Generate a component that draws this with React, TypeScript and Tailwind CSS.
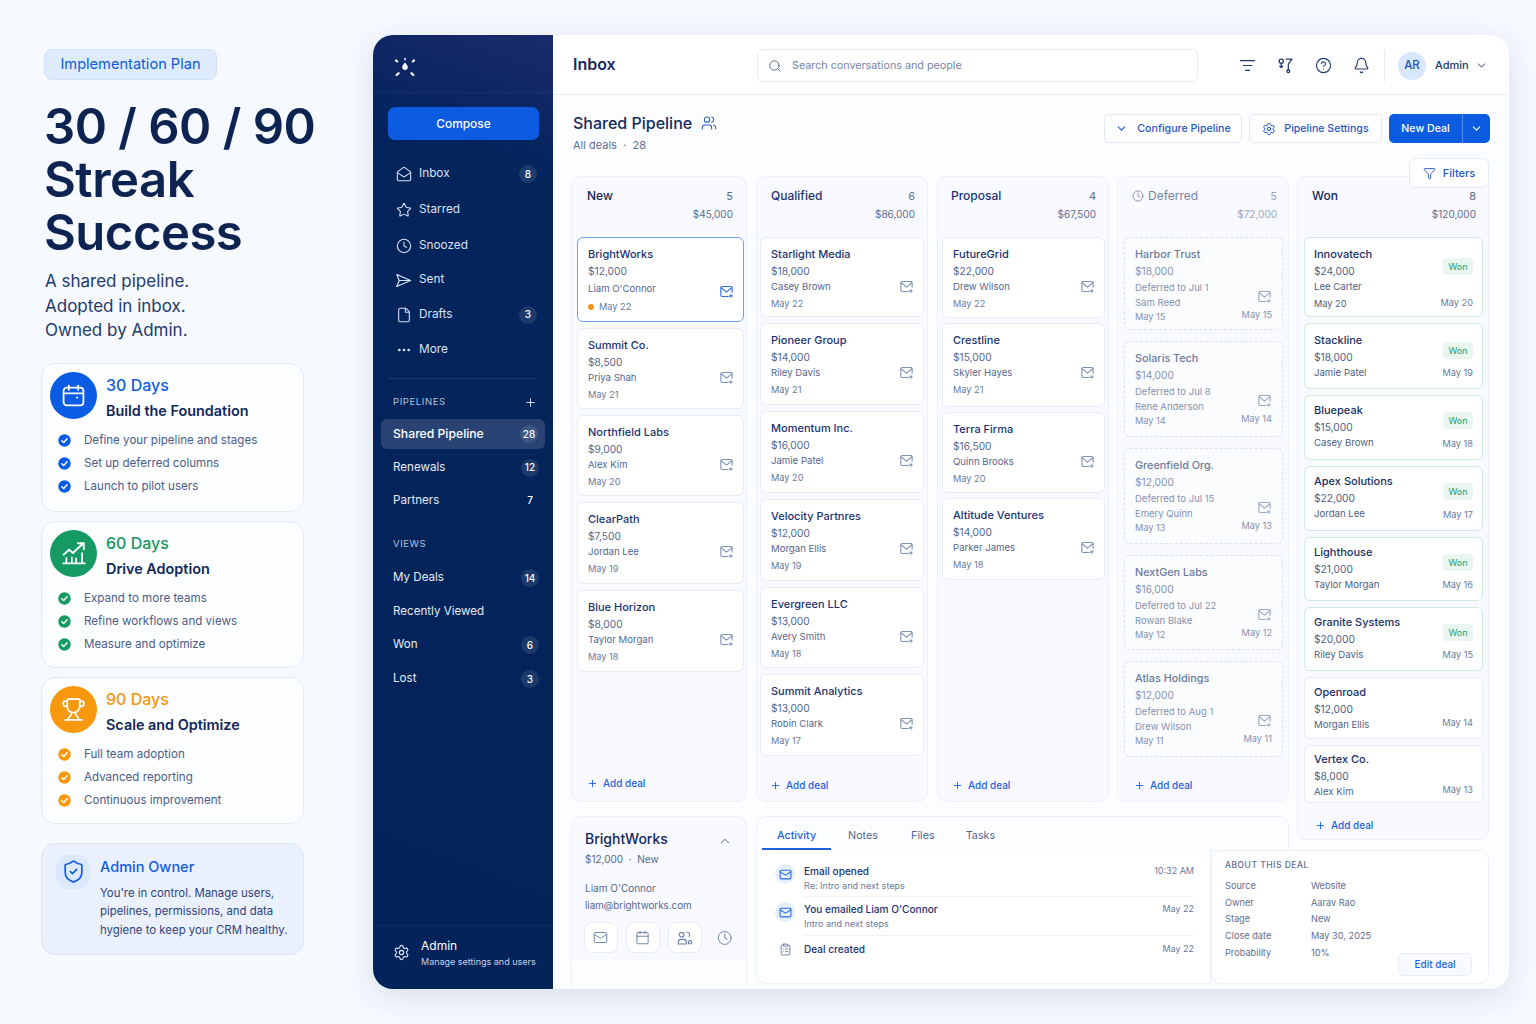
// App.tsx
import {
  Bell,
  Calendar,
  ChevronDown,
  ChevronUp,
  CircleHelp,
  Clock,
  Ellipsis,
  File,
  Filter,
  ListFilter,
  Mail,
  MailOpen,
  Plus,
  Search,
  Settings,
  ShieldCheck,
  Star,
  Trophy,
  Users,
  ClipboardList,
} from 'lucide-react';

type Deal = {
  n: string;
  a: string;
  p: string;
  d?: string;
  h: string;
  extra?: string;
  right?: string;
  badge?: boolean;
  pad?: string;
};

const newDeals: Deal[] = [
  { n: 'BrightWorks', a: '$12,000', p: "Liam O'Connor", d: 'May 22', h: 'h-[85px]' },
  { n: 'Summit Co.', a: '$8,500', p: 'Priya Shah', d: 'May 21', h: 'h-[81px]' },
  { n: 'Northfield Labs', a: '$9,000', p: 'Alex Kim', d: 'May 20', h: 'h-[81px]' },
  { n: 'ClearPath', a: '$7,500', p: 'Jordan Lee', d: 'May 19', h: 'h-[82px]' },
  { n: 'Blue Horizon', a: '$8,000', p: 'Taylor Morgan', d: 'May 18', h: 'h-[82px]' },
];

const qualifiedDeals: Deal[] = [
  { n: 'Starlight Media', a: '$18,000', p: 'Casey Brown', d: 'May 22', h: 'h-[80px]' },
  { n: 'Pioneer Group', a: '$14,000', p: 'Riley Davis', d: 'May 21', h: 'h-[82px]' },
  { n: 'Momentum Inc.', a: '$16,000', p: 'Jamie Patel', d: 'May 20', h: 'h-[82px]' },
  { n: 'Velocity Partnres', a: '$12,000', p: 'Morgan Ellis', d: 'May 19', h: 'h-[82px]' },
  { n: 'Evergreen LLC', a: '$13,000', p: 'Avery Smith', d: 'May 18', h: 'h-[81px]' },
  { n: 'Summit Analytics', a: '$13,000', p: 'Robin Clark', d: 'May 17', h: 'h-[82px]' },
];

const proposalDeals: Deal[] = [
  { n: 'FutureGrid', a: '$22,000', p: 'Drew Wilson', d: 'May 22', h: 'h-[81px]' },
  { n: 'Crestline', a: '$15,000', p: 'Skyler Hayes', d: 'May 21', h: 'h-[84px]' },
  { n: 'Terra Firma', a: '$16,500', p: 'Quinn Brooks', d: 'May 20', h: 'h-[81px]' },
  { n: 'Altitude Ventures', a: '$14,000', p: 'Parker James', d: 'May 18', h: 'h-[82px]' },
];

const deferredDeals: Deal[] = [
  { n: 'Harbor Trust', a: '$18,000', extra: 'Deferred to Jul 1', p: 'Sam Reed', d: 'May 15', h: 'h-[93px]' },
  { n: 'Solaris Tech', a: '$14,000', extra: 'Deferred to Jul 8', p: 'Rene Anderson', d: 'May 14', h: 'h-[96px]' },
  { n: 'Greenfield Org.', a: '$12,000', extra: 'Deferred to Jul 15', p: 'Emery Quinn', d: 'May 13', h: 'h-[96px]' },
  { n: 'NextGen Labs', a: '$16,000', extra: 'Deferred to Jul 22', p: 'Rowan Blake', d: 'May 12', h: 'h-[95px]' },
  { n: 'Atlas Holdings', a: '$12,000', extra: 'Deferred to Aug 1', p: 'Drew Wilson', d: 'May 11', h: 'h-[96px]' },
];

const wonDeals: Deal[] = [
  { n: 'Innovatech', a: '$24,000', p: 'Lee Carter', d: 'May 20', right: 'May 20', badge: true, h: 'h-[80px]', pad: 'pt-[8px] pb-[6px]' },
  { n: 'Stackline', a: '$18,000', p: 'Jamie Patel', right: 'May 19', badge: true, h: 'h-[66px]', pad: 'pt-[8px] pb-[8px]' },
  { n: 'Bluepeak', a: '$15,000', p: 'Casey Brown', right: 'May 18', badge: true, h: 'h-[65px]', pad: 'pt-[6px] pb-[8px]' },
  { n: 'Apex Solutions', a: '$22,000', p: 'Jordan Lee', right: 'May 17', badge: true, h: 'h-[65px]', pad: 'pt-[6px] pb-[8px]' },
  { n: 'Lighthouse', a: '$21,000', p: 'Taylor Morgan', right: 'May 16', badge: true, h: 'h-[64px]', pad: 'pt-[6px] pb-[8px]' },
  { n: 'Granite Systems', a: '$20,000', p: 'Riley Davis', right: 'May 15', badge: true, h: 'h-[64px]', pad: 'pt-[6px] pb-[8px]' },
  { n: 'Openroad', a: '$12,000', p: 'Morgan Ellis', right: 'May 14', h: 'h-[62px]', pad: 'pt-[6px] pb-[8px]' },
  { n: 'Vertex Co.', a: '$8,000', p: 'Alex Kim', right: 'May 13', h: 'h-[58px]', pad: 'pt-[5px] pb-[5px]' },
];

const PlanCalendar = () => (
  <svg width="25" height="25" viewBox="0 0 24 24" fill="none" stroke="white" strokeWidth="1.7" strokeLinecap="round" strokeLinejoin="round">
    <rect x="2.5" y="4.5" width="19" height="17" rx="3" />
    <path d="M2.5 10h19M7.5 2.5v4M16.5 2.5v4" />
    <circle cx="15.5" cy="14" r="1" fill="white" stroke="none" />
  </svg>
);

const PlanChart = () => (
  <svg width="26" height="26" viewBox="0 0 24 24" fill="none" stroke="white" strokeWidth="1.8" strokeLinecap="round" strokeLinejoin="round">
    <path d="M2.5 13.5l5-4.5 3.5 3 9-8.5" />
    <path d="M15.5 3H21v5.5" />
    <path d="M2 21.5h20M5 21v-4.5M10 21v-5M14 21v-4M19.5 21v-9" strokeWidth="1.6" />
  </svg>
);

const planCards = [
  {
    title: '30 Days',
    sub: 'Build the Foundation',
    h: 'h-[149px]',
    titleColor: 'text-[#0f5be3]',
    iconBg: 'bg-[#0b5ce5]',
    dot: '#0b5ce5',
    icon: <PlanCalendar />,
    items: ['Define your pipeline and stages', 'Set up deferred columns', 'Launch to pilot users'],
  },
  {
    title: '60 Days',
    sub: 'Drive Adoption',
    h: 'h-[147px]',
    titleColor: 'text-[#16955f]',
    iconBg: 'bg-[#169a63]',
    dot: '#169a63',
    icon: <PlanChart />,
    items: ['Expand to more teams', 'Refine workflows and views', 'Measure and optimize'],
  },
  {
    title: '90 Days',
    sub: 'Scale and Optimize',
    h: 'h-[147px]',
    titleColor: 'text-[#f7940f]',
    iconBg: 'bg-[#f8980e]',
    dot: '#f8980e',
    icon: <Trophy size={25} strokeWidth={1.7} className="text-white" />,
    items: ['Full team adoption', 'Advanced reporting', 'Continuous improvement'],
  },
];

const Logo = () => (
  <svg width="22" height="22" viewBox="0 0 22 22" fill="none" stroke="white" strokeWidth="2.2" strokeLinecap="round">
    <path d="M2 3.5l1.2.8M20 3.5l-1.2.8M2.6 18l2-1.8M19.4 18l-2-1.8" />
    <path d="M11 1.5v1.2" strokeWidth="1.4" />
    <path d="M11 5.5c2 2.2 2.8 3.4 2.8 4.6a2.8 2.8 0 0 1-5.6 0c0-1.2.8-2.4 2.8-4.6z" fill="white" stroke="none" />
  </svg>
);

const SentIcon = () => (
  <svg width="17" height="17" viewBox="0 0 24 24" fill="none" stroke="currentColor" strokeWidth="1.7" strokeLinejoin="round" strokeLinecap="round">
    <path d="M2.5 3.5L22 12 2.5 20.5 6 12z" />
    <path d="M6 12h16" />
  </svg>
);

const RouteIcon = () => (
  <svg width="17" height="17" viewBox="0 0 24 24" fill="none" stroke="currentColor" strokeWidth="1.8" strokeLinecap="round" strokeLinejoin="round">
    <circle cx="6" cy="6" r="3" />
    <path d="M6 9v6M4 13l2 2 2-2" />
    <path d="M13 3h8l-5 7v8" />
    <circle cx="16" cy="20" r="2" />
  </svg>
);

const TeamGearIcon = () => (
  <svg width="16" height="16" viewBox="0 0 24 24" fill="none" stroke="currentColor" strokeWidth="1.7" strokeLinecap="round" strokeLinejoin="round">
    <circle cx="7" cy="7" r="3.5" />
    <path d="M2 21v-3a4 4 0 0 1 4-4h4a4 4 0 0 1 4 4v3z" />
    <path d="M15 3.5a3.5 3.5 0 0 1 3 6" />
    <circle cx="19.5" cy="18.5" r="2.5" />
  </svg>
);

const CardMail = ({ active, dim }: { active?: boolean; dim?: boolean }) => (
  <svg
    width="15"
    height="15"
    viewBox="0 0 24 24"
    fill="none"
    stroke="currentColor"
    strokeWidth="1.8"
    strokeLinecap="round"
    strokeLinejoin="round"
    className={active ? 'text-[#2f6fe6]' : dim ? 'text-[#9aa8c4]' : 'text-[#8092b6]'}
  >
    <path d="M21 13V6a2 2 0 0 0-2-2H5a2 2 0 0 0-2 2v12a2 2 0 0 0 2 2h10" />
    <path d="M3.5 6l8.5 7 8.5-7" />
    <path d="M19 17v4M17 19h4" />
  </svg>
);

const CheckDot = ({ color }: { color: string }) => (
  <svg width="13" height="13" viewBox="0 0 13 13">
    <circle cx="6.5" cy="6.5" r="6.2" fill={color} />
    <path d="M3.8 6.7l1.9 1.8 3.4-3.7" fill="none" stroke="white" strokeWidth="1.5" strokeLinecap="round" strokeLinejoin="round" />
  </svg>
);

const Badge = ({ children }: { children: React.ReactNode }) => (
  <span className="ml-auto w-[18px] h-[18px] rounded-full bg-white/10 flex items-center justify-center text-[10px] font-medium text-white">
    {children}
  </span>
);

const NavItem = ({ icon, label, badge, cls }: { icon: React.ReactNode; label: string; badge?: string; cls: string }) => (
  <div className={`flex items-center pl-[22px] pr-[16px] text-[11.8px] text-[#d8e2f5] ${cls}`}>
    <span className="w-[17px] flex justify-center text-[#d8e2f5]">{icon}</span>
    <span className="ml-[7px]">{label}</span>
    {badge && <Badge>{badge}</Badge>}
  </div>
);

const SubItem = ({ label, badge, cls, plain }: { label: string; badge?: string; cls: string; plain?: boolean }) => (
  <div className={`flex items-center pl-[20px] pr-[14px] text-[11.6px] text-[#e4ebf8] ${cls}`}>
    <span>{label}</span>
    {badge &&
      (plain ? (
        <span className="ml-auto w-[18px] text-center text-[10px] font-medium text-white">{badge}</span>
      ) : (
        <Badge>{badge}</Badge>
      ))}
  </div>
);

const PipelineCard = ({ deal, selected }: { deal: Deal; selected?: boolean }) => (
  <div
    className={`${deal.h} bg-white rounded-[6px] flex justify-between pl-[10px] pr-[9px] pt-[8px] border ${
      selected ? 'border-[#6f9ff0]' : 'border-[#e7edf8]'
    }`}
  >
    <div className="flex flex-col text-[9.6px] leading-[16.7px] text-[#55668e]">
      <div className="text-[11px] font-medium text-[#1b3372]">{deal.n}</div>
      <div className="text-[10.2px]">{deal.a}</div>
      <div className={selected ? 'mt-[2px]' : ''}>{deal.p}</div>
      <div className={`flex items-center gap-[5px] text-[9.2px] text-[#6b7a9c] ${selected ? 'mt-[1px]' : ''}`}>
        {selected && <span className="w-[6px] h-[6px] rounded-full bg-[#f7941d]" />}
        {deal.d}
      </div>
    </div>
    <div className={selected ? 'mt-[38px]' : 'mt-[33px]'}>
      <CardMail active={selected} />
    </div>
  </div>
);

const DeferredCard = ({ deal }: { deal: Deal }) => (
  <div className={`${deal.h} rounded-[6px] border border-dashed border-[#d8e0ef] bg-[#fbfcfe] flex justify-between pl-[10px] pr-[10px] pt-[8px]`}>
    <div className="text-[9.5px] leading-[15px] text-[#8492b0]">
      <div className="text-[10.8px] leading-[17px] font-medium text-[#6b7a9c]">{deal.n}</div>
      <div className="text-[10.2px] leading-[17px]">{deal.a}</div>
      <div>{deal.extra}</div>
      <div>{deal.p}</div>
      <div className="text-[9.2px] leading-[14px]">{deal.d}</div>
    </div>
    <div className="flex flex-col items-end pt-[43px] gap-[4px] text-[9.2px] text-[#8492b0]">
      <CardMail dim />
      <span>{deal.d}</span>
    </div>
  </div>
);

const WonCard = ({ deal, first }: { deal: Deal; first?: boolean }) => (
  <div
    className={`${deal.h} ${deal.pad} bg-white rounded-[6px] border ${deal.badge ? 'border-[#cdeadc]' : 'border-[#e7edf8]'} flex justify-between pl-[9px] pr-[9px]`}
  >
    <div className="text-[9.6px] leading-[16.5px] text-[#4d5e88]">
      <div className="text-[11px] font-medium text-[#1a2f63]">{deal.n}</div>
      <div className="text-[10.2px]">{deal.a}</div>
      <div>{deal.p}</div>
      {deal.d && <div className="text-[9.2px]">{deal.d}</div>}
    </div>
    <div className="flex flex-col items-end justify-between text-[9.2px] text-[#6b7a9c]">
      {deal.badge ? (
        <span className={`${first ? 'mt-[12px]' : 'mt-[10px]'} w-[30px] h-[17px] rounded-[4px] bg-[#e9f6ef] text-[#2a9a68] text-[9px] flex items-center justify-center`}>Won</span>
      ) : (
        <span />
      )}
      <span>{deal.right}</span>
    </div>
  </div>
);

const AddDeal = ({ cls }: { cls: string }) => (
  <div className={`mt-auto flex items-center gap-[5px] text-[10px] font-medium text-[#1f5fe0] ${cls}`}>
    <Plus size={11} strokeWidth={2} />
    Add deal
  </div>
);

const ColumnHeader = ({ name, count, total, cls, totalCls }: { name: React.ReactNode; count: string; total: string; cls: string; totalCls?: string }) => (
  <div className={`h-[60px] pt-[10px] ${cls}`}>
    <div className="flex justify-between items-center h-[18px] text-[12px] font-medium">
      <span className="flex items-center gap-[4px]">{name}</span>
      <span className="text-[11px] font-normal opacity-70">{count}</span>
    </div>
    <div className={`text-right text-[10px] mt-[2px] ${totalCls ?? 'text-[#5c6c92]'}`}>{total}</div>
  </div>
);

const Activity = ({ title, sub, time, icon, cls }: { title: string; sub?: string; time: string; icon: React.ReactNode; cls?: string }) => (
  <div className="flex pl-[17px] pr-[16px]">
    <div className="w-[22px] flex justify-center">{icon}</div>
    <div className={`ml-[8px] flex-1 flex justify-between ${cls ?? ''}`}>
      <div>
        <div className="text-[10.1px] leading-[14px] font-medium text-[#1b3372]">{title}</div>
        {sub && <div className="text-[9.05px] leading-[14px] mt-[1px] text-[#6b7a9c]">{sub}</div>}
      </div>
      <span className="text-[9px] leading-[14px] text-[#6b7a9c]">{time}</span>
    </div>
  </div>
);

const MailBubble = () => (
  <span className="w-[20px] h-[20px] rounded-full bg-[#e6effd] flex items-center justify-center">
    <Mail size={13} className="text-[#2a6be4]" />
  </span>
);

const ActionBtn = ({ children }: { children: React.ReactNode }) => (
  <div className="w-[35px] h-[31px] rounded-[8px] bg-white border border-[#e6ecf7] flex items-center justify-center text-[#6d7fa6]">{children}</div>
);

const aboutRows = [
  ['Source', 'Website'],
  ['Owner', 'Aarav Rao'],
  ['Stage', 'New'],
  ['Close date', 'May 30, 2025'],
];

export default function App() {
  return (
    <div className="w-[1536px] h-[1024px] overflow-hidden bg-[#f6f9fe] flex font-['Inter',sans-serif]">
      {/* left intro column */}
      <div className="w-[373px] shrink-0 pl-[41px] pr-[69px] pt-[49px]">
        <div className="ml-[3px] w-[173px] h-[31px] rounded-[8px] bg-[#deebfd] border border-[#cfe0fa] flex items-center justify-center text-[14.6px] text-[#0c5ae0]">
          Implementation Plan
        </div>
        <h1 className="ml-[3px] mt-[20px] whitespace-nowrap text-[49px] leading-[53px] font-semibold tracking-[-0.5px] text-[#0d2352]">
          30 / 60 / 90
          <br />
          Streak
          <br />
          Success
        </h1>
        <p className="ml-[4px] mt-[10px] text-[17px] leading-[24.5px] text-[#243a6b]">
          A shared pipeline.
          <br />
          Adopted in inbox.
          <br />
          Owned by Admin.
        </p>
        <div className="mt-[20px] flex flex-col gap-[9px]">
          {planCards.map((c) => (
            <div key={c.title} className={`${c.h} bg-white/80 rounded-[14px] border border-[#e1e9f7] pl-[8px] pt-[8px]`}>
              <div className="flex">
                <div className={`w-[47px] h-[47px] rounded-full flex items-center justify-center ${c.iconBg}`}>{c.icon}</div>
                <div className="ml-[9px]">
                  <div className={`text-[16px] leading-[27px] font-medium ${c.titleColor}`}>{c.title}</div>
                  <div className="text-[14.4px] leading-[24px] font-semibold text-[#10275a]">{c.sub}</div>
                </div>
              </div>
              <div className="mt-[9px] pl-[8px] flex flex-col gap-[5px]">
                {c.items.map((it) => (
                  <div key={it} className="flex items-center h-[18px] text-[11.6px] text-[#4b5c88]">
                    <CheckDot color={c.dot} />
                    <span className="ml-[13px]">{it}</span>
                  </div>
                ))}
              </div>
            </div>
          ))}
        </div>
        <div className="mt-[19px] h-[112px] rounded-[14px] bg-[#eaf1fd] border border-[#d9e5f8] pl-[14px] pt-[11px] flex">
          <div className="w-[34px] h-[34px] shrink-0 rounded-[12px] bg-[#dce8fc] flex items-center justify-center">
            <ShieldCheck size={25} strokeWidth={1.6} className="text-[#0f5be3]" />
          </div>
          <div className="ml-[10px]">
            <div className="text-[14.5px] leading-[24px] font-medium text-[#0f5be3]">Admin Owner</div>
            <div className="mt-[5px] text-[11.4px] leading-[18.5px] text-[#2e4280] whitespace-nowrap">
              You're in control. Manage users,
              <br />
              pipelines, permissions, and data
              <br />
              hygiene to keep your CRM healthy.
            </div>
          </div>
        </div>
      </div>

      {/* app shell */}
      <div className="mt-[35px] w-[1136px] h-[954px] rounded-[20px] overflow-hidden flex bg-white shadow-[0_8px_30px_rgba(40,70,130,0.14)]">
        {/* sidebar */}
        <aside className="w-[180px] shrink-0 flex flex-col bg-[linear-gradient(200deg,#1b2a6d_0%,#04245c_14%,#03235a_100%)]">
          <div className="h-[58px] shrink-0 border-b border-white/5 pl-[21px] pt-[22px]">
            <Logo />
          </div>
          <div className="ml-[15px] mr-[14px] mt-[14px] h-[33px] rounded-[7px] bg-[#0b5ce0] flex items-center justify-center text-[11.9px] font-medium text-white">
            Compose
          </div>
          <div className="mt-[16px]">
            <NavItem cls="h-[36px]" icon={<MailOpen size={16} strokeWidth={1.6} />} label="Inbox" badge="8" />
            <NavItem cls="h-[36px]" icon={<Star size={16} strokeWidth={1.6} />} label="Starred" />
            <NavItem cls="h-[35px]" icon={<Clock size={16} strokeWidth={1.6} />} label="Snoozed" />
            <NavItem cls="h-[34px]" icon={<SentIcon />} label="Sent" />
            <NavItem cls="h-[35px]" icon={<File size={16} strokeWidth={1.6} />} label="Drafts" badge="3" />
            <NavItem cls="h-[35px]" icon={<Ellipsis size={16} strokeWidth={2} />} label="More" />
          </div>
          <div className="mx-[15px] mt-[11px] border-t border-white/10" />
          <div className="pl-[20px] pr-[16px] mt-[15px] h-[16px] flex items-center justify-between text-[9.5px] tracking-[0.6px] text-[#b4c2dc]">
            PIPELINES
            <Plus size={13} strokeWidth={1.7} className="text-[#dde5f5]" />
          </div>
          <div className="mt-[9px] mx-[8px] h-[30px] rounded-[6px] bg-white/15 flex items-center pl-[12px] pr-[7px] text-[12.2px] font-medium text-white">
            Shared Pipeline
            <Badge>28</Badge>
          </div>
          <SubItem cls="h-[33px] mt-[2px]" label="Renewals" badge="12" />
          <SubItem cls="h-[33px]" label="Partners" badge="7" plain />
          <div className="pl-[20px] mt-[19px] h-[16px] flex items-center text-[9.5px] tracking-[0.6px] text-[#b4c2dc]">VIEWS</div>
          <SubItem cls="h-[34px] mt-[9px]" label="My Deals" badge="14" />
          <SubItem cls="h-[33px]" label="Recently Viewed" />
          <SubItem cls="h-[34px]" label="Won" badge="6" />
          <SubItem cls="h-[34px]" label="Lost" badge="3" />
          <div className="mt-auto border-t border-white/5 h-[64px] pl-[20px] pb-[10px] flex items-center">
            <Settings size={17} strokeWidth={1.6} className="text-[#e4ebf8] shrink-0" />
            <div className="ml-[11px] pt-[1px]">
              <div className="text-[12px] leading-[17px] text-white">Admin</div>
              <div className="text-[9px] leading-[15px] text-[#c5d1e8] whitespace-nowrap">Manage settings and users</div>
            </div>
          </div>
        </aside>

        {/* main */}
        <main className="flex-1 flex flex-col min-w-0 bg-[#fcfdff]">
          {/* top bar */}
          <div className="h-[60px] shrink-0 border-b border-[#e8eef8] flex items-center pl-[20px] pt-[2px] bg-white">
            <span className="w-[184px] shrink-0 -mt-[3px] text-[16px] font-semibold text-[#17295c]">Inbox</span>
            <div className="w-[441px] shrink-0 h-[33px] rounded-[6px] border border-[#e3e9f5] flex items-center pl-[10px] text-[10.75px] text-[#7685a6]">
              <Search size={14} strokeWidth={1.7} className="text-[#5f6f92]" />
              <span className="ml-[10px] pt-[1px]">Search conversations and people</span>
            </div>
            <div className="ml-[41px] shrink-0 flex items-center gap-[21px] text-[#233a6c]">
              <ListFilter size={17} strokeWidth={1.7} />
              <RouteIcon />
              <CircleHelp size={17} strokeWidth={1.6} />
              <Bell size={17} strokeWidth={1.6} />
            </div>
            <div className="ml-[14px] h-[32px] border-l border-[#e6ecf7]" />
            <div className="ml-[13px] shrink-0 w-[28px] h-[28px] rounded-full bg-[#d9e7fd] flex items-center justify-center text-[11.5px] font-medium text-[#1b4fb3]">AR</div>
            <span className="ml-[9px] text-[11px] font-medium text-[#223868]">Admin</span>
            <ChevronDown size={13} strokeWidth={1.8} className="ml-[6px] text-[#223868]" />
          </div>

          {/* page heading */}
          <div className="h-[81px] shrink-0 pl-[20px] pr-[19px] pt-[18px] flex justify-between items-start">
            <div>
              <div className="flex items-center gap-[9px] h-[20px] text-[16px] font-medium text-[#13295c]">
                Shared Pipeline
                <Users size={16} strokeWidth={1.6} className="text-[#2e5fb8]" />
              </div>
              <div className="mt-[4px] text-[11px] text-[#5d6f98]">All deals &nbsp;·&nbsp; 28</div>
            </div>
            <div className="mt-[1px] flex items-center gap-[7px] text-[10.6px] font-medium text-[#1f57c4]">
              <div className="w-[138px] h-[29px] rounded-[5px] border border-[#e0e7f5] bg-white flex items-center justify-center gap-[9px]">
                <ChevronDown size={13} strokeWidth={2} />
                Configure Pipeline
              </div>
              <div className="w-[133px] h-[29px] rounded-[5px] border border-[#e0e7f5] bg-white flex items-center justify-center gap-[8px]">
                <Settings size={14} strokeWidth={1.7} />
                Pipeline Settings
              </div>
              <div className="w-[101px] h-[29px] rounded-[5px] bg-[#0b5ce0] flex items-center text-white">
                <span className="w-[73px] text-center">New Deal</span>
                <span className="flex-1 h-full border-l border-white/30 flex items-center justify-center">
                  <ChevronDown size={13} strokeWidth={2} />
                </span>
              </div>
            </div>
          </div>

          {/* board */}
          <div className="pl-[18px] relative grid flex-1 grid-cols-[176px_9px_172px_9px_172px_8px_94px_78px_8px_192px] grid-rows-[626px_14px_24px_10px_138px]">
            <section className="col-start-1 col-end-2 row-start-1 row-end-2 rounded-[10px] border border-[#eaeff9] bg-[#f8faff] flex flex-col pl-[5px] pr-[2px]">
              <ColumnHeader name="New" count="5" total="$45,000" cls="pl-[10px] pr-[11px] text-[#10265a]" />
              <div className="flex flex-col gap-[6px]">
                {newDeals.map((d, i) => (
                  <PipelineCard key={d.n} deal={d} selected={i === 0} />
                ))}
              </div>
              <AddDeal cls="pl-[10px] pb-[10px]" />
            </section>

            <section className="col-start-3 col-end-4 row-start-1 row-end-2 rounded-[10px] border border-[#eaeff9] bg-[#f8faff] flex flex-col pl-[3px] pr-[3px]">
              <ColumnHeader name="Qualified" count="6" total="$86,000" cls="pl-[11px] pr-[9px] text-[#1b3372]" />
              <div className="flex flex-col gap-[6px]">
                {qualifiedDeals.map((d) => (
                  <PipelineCard key={d.n} deal={d} />
                ))}
              </div>
              <AddDeal cls="pl-[10px] pb-[8px]" />
            </section>

            <section className="col-start-5 col-end-6 row-start-1 row-end-2 rounded-[10px] border border-[#eaeff9] bg-[#f8faff] flex flex-col pl-[4px] pr-[3px]">
              <ColumnHeader name="Proposal" count="4" total="$67,500" cls="pl-[9px] pr-[9px] text-[#1b3372]" />
              <div className="flex flex-col gap-[5px]">
                {proposalDeals.map((d) => (
                  <PipelineCard key={d.n} deal={d} />
                ))}
              </div>
              <AddDeal cls="pl-[10px] pb-[8px]" />
            </section>

            <section className="col-start-7 col-end-9 row-start-1 row-end-2 rounded-[10px] border border-[#edf1f9] bg-[#f8faff] flex flex-col pl-[6px] pr-[5px]">
              <ColumnHeader
                name={
                  <>
                    <Clock size={12} strokeWidth={1.6} />
                    Deferred
                  </>
                }
                count="5"
                total="$72,000"
                cls="pl-[8px] pr-[6px] text-[#76849f] [&>div:first-child]:font-normal"
                totalCls="text-[#9aa7c0]"
              />
              <div className="flex flex-col gap-[11px]">
                {deferredDeals.map((d) => (
                  <DeferredCard key={d.n} deal={d} />
                ))}
              </div>
              <AddDeal cls="pl-[10px] pb-[8px]" />
            </section>

            <section className="col-start-10 col-end-11 row-start-1 row-end-4 rounded-[10px] border border-[#eaeff9] bg-[#f8faff] flex flex-col pl-[6px] pr-[5px]">
              <ColumnHeader name="Won" count="8" total="$120,000" cls="pl-[8px] pr-[7px] text-[#10265a]" />
              <div className="flex flex-col gap-[6px]">
                {wonDeals.map((d, i) => (
                  <WonCard key={d.n} deal={d} first={i === 0} />
                ))}
              </div>
              <AddDeal cls="pl-[11px] pb-[6px]" />
            </section>

            {/* floats over the Won column */}
            <div className="absolute right-[20px] top-[-18px] w-[80px] h-[30px] rounded-[6px] border border-[#e2e9f6] bg-white flex items-center justify-center gap-[7px] text-[11px] font-medium text-[#1f57c4]">
              <Filter size={13} strokeWidth={1.7} />
              Filters
            </div>

            {/* deal summary */}
            <section className="col-start-1 col-end-2 row-start-3 row-end-6 rounded-t-[10px] border border-b-0 border-[#ebf0f9] bg-[linear-gradient(#f8faff_0%,#f8faff_84%,#fdfeff_84%)] pl-[13px] pr-[14px] pt-[12px]">
              <div className="flex items-center justify-between h-[18px]">
                <span className="text-[14px] font-medium text-[#12275a]">BrightWorks</span>
                <ChevronUp size={14} strokeWidth={1.7} className="text-[#4f6188] mt-[5px]" />
              </div>
              <div className="mt-[4px] text-[10px] leading-[16px] text-[#55668e]">$12,000 &nbsp;·&nbsp; New</div>
              <div className="mt-[13px] text-[10px] leading-[16px] text-[#55668e]">Liam O'Connor</div>
              <div className="mt-[2px] text-[9.8px] leading-[16px] text-[#55668e]">liam@brightworks.com</div>
              <div className="mt-[8px] -ml-[1px] flex items-center gap-[8px]">
                <ActionBtn>
                  <Mail size={15} strokeWidth={1.5} />
                </ActionBtn>
                <ActionBtn>
                  <Calendar size={15} strokeWidth={1.5} />
                </ActionBtn>
                <ActionBtn>
                  <TeamGearIcon />
                </ActionBtn>
                <Clock size={16} strokeWidth={1.5} className="ml-[7px] text-[#6d7fa6]" />
              </div>
            </section>

            {/* tabs */}
            <div className="col-start-3 col-end-9 row-start-3 row-end-5 -mb-[1px] rounded-t-[10px] border border-[#ebf0f9] bg-[#fcfdff] flex items-end pl-[5px] text-[10.8px] text-[#55668e]">
              <div className="w-[69px] h-[30px] pt-[4px] flex items-center justify-center border-b-2 border-[#1f5fe0] font-medium text-[#1f5fe0]">Activity</div>
              <div className="ml-[17px] h-[30px] pt-[2px] flex items-center">Notes</div>
              <div className="ml-[33px] h-[30px] pt-[2px] flex items-center">Files</div>
              <div className="ml-[31px] h-[30px] pt-[2px] flex items-center">Tasks</div>
            </div>

            {/* activity */}
            <div className="col-start-3 col-end-8 row-start-5 row-end-6 rounded-bl-[10px] border border-t-0 border-[#ebf0f9] bg-white pt-[14px] mb-[4px] flex flex-col gap-[5px]">
              <Activity title="Email opened" sub="Re: Intro and next steps" time="10:32 AM" icon={<MailBubble />} cls="border-b border-[#edf1f8] h-[33px]" />
              <Activity title="You emailed Liam O'Connor" sub="Intro and next steps" time="May 22" icon={<MailBubble />} cls="border-b border-[#edf1f8] h-[34px]" />
              <Activity title="Deal created" time="May 22" icon={<ClipboardList size={13} strokeWidth={1.6} className="text-[#5a6d95] mt-[2px]" />} cls="mt-[1px]" />
            </div>

            {/* about */}
            <div className="col-start-8 col-end-11 row-start-5 row-end-6 mb-[4px] rounded-[10px] border border-[#ebf0f9] bg-white pl-[13px] pr-[16px] pt-[8px] flex flex-col">
              <div className="text-[8.5px] leading-[12px] font-medium tracking-[0.5px] text-[#5d6d92]">ABOUT THIS DEAL</div>
              <div className="mt-[7px] text-[9.2px] leading-[16.7px] text-[#5d6d92]">
                {aboutRows.map(([k, v]) => (
                  <div key={k} className="flex">
                    <span className="w-[86px]">{k}</span>
                    <span>{v}</span>
                  </div>
                ))}
                <div className="flex items-start">
                  <span className="w-[86px]">Probability</span>
                  <span>10%</span>
                  <span className="ml-auto mt-[8px] w-[74px] h-[23px] rounded-[5px] border border-[#e6ecf7] bg-[#f8faff] flex items-center justify-center text-[10px] font-medium text-[#1f5fe0]">
                    Edit deal
                  </span>
                </div>
              </div>
            </div>
          </div>
        </main>
      </div>
    </div>
  );
}
